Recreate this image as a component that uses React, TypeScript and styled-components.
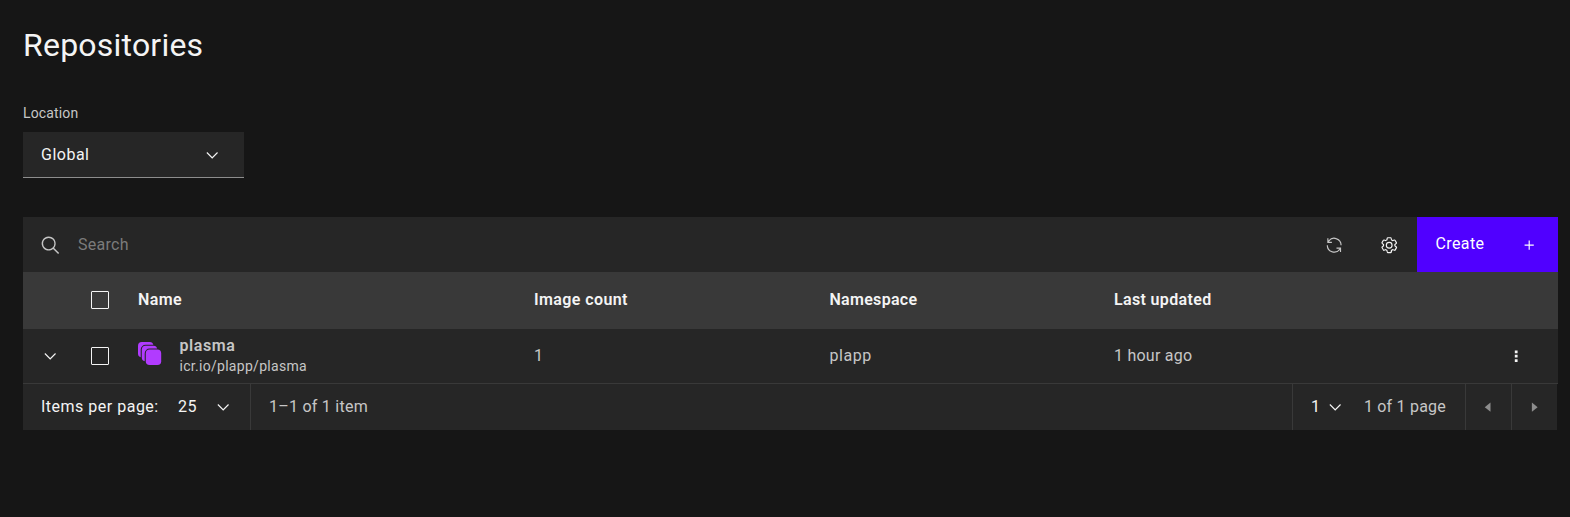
import React from 'react';
import styled, { createGlobalStyle, css } from 'styled-components';

const GlobalStyle = createGlobalStyle`
  *, *::before, *::after { box-sizing: border-box; }
  body {
    margin: 0;
    background: #161616;
    color: #f4f4f4;
    font-family: Roboto, "Liberation Sans", sans-serif;
    font-size: 16px;
    line-height: 20px;
    letter-spacing: 0.4px;
  }
  button { font: inherit; letter-spacing: inherit; color: inherit; background: none; border: 0; padding: 0; }
`;

const Page = styled.main`
  min-height: 517px;
  padding: 26px 12px 0 23px;
`;

const Title = styled.h1`
  margin: 0;
  font-size: 32px;
  font-weight: 400;
  line-height: 38px;
  letter-spacing: 0.22px;
`;

const Label = styled.label`
  display: block;
  margin-top: 39px;
  font-size: 14px;
  line-height: 21px;
  letter-spacing: 0.15px;
  color: #c6c6c6;
`;

const Dropdown = styled.button`
  display: flex;
  align-items: center;
  justify-content: space-between;
  width: 221px;
  height: 46px;
  margin-top: 8px;
  padding: 1px 23px 0 18px;
  background: #262626;
  border-bottom: 1px solid #8d8d8d;
  letter-spacing: 0.5px;
`;

const Icon = styled.svg`
  display: block;
  flex: none;
  fill: currentColor;
`;

const Panel = styled.section`
  margin-top: 39px;
`;

const Toolbar = styled.div`
  display: flex;
  height: 55px;
  background: #262626;
`;

const SearchBox = styled.div`
  display: flex;
  flex: 1;
  align-items: center;
  gap: 18px;
  padding: 1px 0 0 18px;
  color: #c6c6c6;
`;

const Placeholder = styled.span`
  color: #7b7b7b;
  letter-spacing: 0.29px;
`;

const ToolButton = styled.button<{ $dim?: boolean }>`
  display: grid;
  place-items: center;
  width: 55px;
  padding-top: 1px;
  color: ${(p) => (p.$dim ? '#c6c6c6' : '#f4f4f4')};
`;

const CreateButton = styled.button`
  display: flex;
  align-items: center;
  justify-content: space-between;
  width: 141px;
  padding: 1px 20px 0 18.5px;
  background: #5000ff;
  color: #fff;

  span { margin-top: -3px; }
`;

const rowGrid = css`
  display: grid;
  grid-template-columns: 54px 61px 396px 295.5px 284.5px 1fr 83px;
  align-items: center;
`;

const HeaderRow = styled.div`
  ${rowGrid}
  height: 57px;
  padding-bottom: 2px;
  background: #393939;
  font-weight: 600;
`;

const BodyRow = styled.div`
  ${rowGrid}
  height: 55px;
  background: #262626;
  border-bottom: 1px solid #393939;
  color: #c6c6c6;
`;

const Center = styled.div`
  display: grid;
  place-items: center;
  color: #f4f4f4;
`;

const Checkbox = styled.span`
  width: 18px;
  height: 18px;
  margin-left: 14px;
  border: 1px solid #f4f4f4;
  border-radius: 1px;
`;

const Cell = styled.span<{ $spacing?: number }>`
  letter-spacing: ${(p) => p.$spacing ?? 0.4}px;
`;

const NameCell = styled.div`
  display: flex;
  align-items: center;
  gap: 17.5px;

  svg { margin-top: -5px; }
`;

const RepoText = styled.div`
  display: flex;
  flex-direction: column;
  padding-bottom: 1px;
`;

const RepoName = styled.span`
  font-weight: 600;
  line-height: 21px;
  letter-spacing: 0.57px;
`;

const RepoPath = styled.span`
  font-size: 14px;
  line-height: 20px;
  letter-spacing: 0.29px;
`;

const Pagination = styled.div`
  display: flex;
  height: 46px;
  margin-right: 1px;
  background: #262626;
`;

const PageGroup = styled.div<{ $width?: number; $divider?: 'left' | 'right'; $muted?: boolean }>`
  display: flex;
  align-items: center;
  padding-left: 18px;
  ${(p) => (p.$width ? `width: ${p.$width}px;` : 'flex: 1;')}
  ${(p) => p.$divider && `border-${p.$divider}: 1px solid #393939;`}
  ${(p) => p.$muted && 'color: #c6c6c6; letter-spacing: 0.25px;'}
`;

const ItemsLabel = styled.span`
  width: 137px;
  letter-spacing: 0.5px;
`;

const PageSize = styled.span`
  width: 35.7px;
`;

const PageNumber = styled.span`
  width: 15.4px;
`;

const PageTotal = styled.span`
  margin-left: 19.1px;
  color: #c6c6c6;
  letter-spacing: 0.22px;
`;

const PageArrow = styled.button`
  display: grid;
  place-items: center;
  width: 46px;
  border-left: 1px solid #393939;
  color: #8d8d8d;
`;

const paths = {
  chevron: 'M8 11L3 6 3.7 5.3 8 9.6 12.3 5.3 13 6z',
  search:
    'M15.3 14.3l-4.25-4.25a5.9 5.9 0 1 0-.9.9l4.25 4.25zM1.75 6.4a4.75 4.75 0 1 1 4.75 4.75A4.75 4.75 0 0 1 1.75 6.4z',
  renew:
    'M6 5H3.39A5.5 5.5 0 0 1 13.5 8h1A6.5 6.5 0 0 0 3 3.84V2H2v4h4zM10 11h2.61A5.5 5.5 0 0 1 2.5 8h-1A6.5 6.5 0 0 0 13 12.16V14h1v-4h-4z',
  settings:
    'M13.5 8.4V7.6l1-.8c.4-.3.4-.9.2-1.3l-1.2-2C13.3 3.2 13 3 12.6 3c-.1 0-.2 0-.3.1l-1.2.4c-.2-.1-.4-.3-.7-.4l-.3-1.3C10.1 1.3 9.7 1 9.2 1H6.8c-.5 0-.9.3-1 .8L5.6 3.1C5.3 3.2 5.1 3.3 4.9 3.4L3.7 3H3.4C3 3 2.7 3.2 2.5 3.5l-1.2 2C1.1 5.9 1.2 6.4 1.6 6.8l.9.8v.8l-.9.8c-.4.3-.5.9-.2 1.3l1.2 2C2.7 12.8 3 13 3.4 13c.1 0 .2 0 .3-.1l1.2-.4c.2.1.4.3.7.4l.3 1.3c.1.5.5.8 1 .8h2.4c.5 0 .9-.3 1-.8l.3-1.3c.2-.1.4-.2.7-.4l1.2.4c.1 0 .2.1.3.1.4 0 .7-.2.9-.5l1.1-2c.2-.4.2-.9-.2-1.3zM12.6 12l-1.7-.6c-.4.3-.9.6-1.4.8L9.2 14H6.8l-.4-1.8c-.5-.2-.9-.5-1.4-.8L3.4 12l-1.2-2 1.4-1.2c-.1-.5-.1-1.1 0-1.6L2.2 6l1.2-2 1.7.6C5.5 4.2 6 4 6.5 3.8L6.8 2h2.4l.4 1.8c.5.2.9.5 1.4.8L12.6 4l1.2 2-1.4 1.2c.1.5.1 1.1 0 1.6l1.4 1.2zM8 11a3 3 0 1 1 0-6 3 3 0 0 1 0 6zM8 6a2 2 0 1 0 0 4 2 2 0 0 0 0-4z',
  add: 'M8.5 7.5V4h-1v3.5H4v1h3.5V12h1V8.5H12v-1z',
  menu: 'M6.8 3h2.4v2.4H6.8zM6.8 6.8h2.4v2.4H6.8zM6.8 10.6h2.4V13H6.8z',
  left: 'M10 12V4L5 8z',
  right: 'M6 4v8l5-4z',
};

function Glyph({ name, size = 18.4 }: { name: keyof typeof paths; size?: number }) {
  return (
    <Icon width={size} height={size} viewBox="0 0 16 16" fillRule="evenodd" aria-hidden>
      <path d={paths[name]} />
    </Icon>
  );
}

function StackIcon() {
  return (
    <Icon width="24" height="24" viewBox="0 0 24 24" aria-hidden>
      <g fill="#b13bff" stroke="#262626" strokeWidth="2.2" paintOrder="stroke">
        <rect x="0" y="0" width="15.4" height="15.4" rx="3.8" />
        <rect x="3.8" y="3.8" width="15.4" height="15.4" rx="3.8" />
        <rect x="7.8" y="7.6" width="15.4" height="15.4" rx="3.8" />
      </g>
    </Icon>
  );
}

export default function App() {
  return (
    <>
      <GlobalStyle />
      <Page>
        <Title>Repositories</Title>
        <Label>Location</Label>
        <Dropdown>
          Global
          <Glyph name="chevron" />
        </Dropdown>

        <Panel>
          <Toolbar>
            <SearchBox>
              <Glyph name="search" size={19} />
              <Placeholder>Search</Placeholder>
            </SearchBox>
            <ToolButton $dim aria-label="Refresh">
              <Glyph name="renew" />
            </ToolButton>
            <ToolButton aria-label="Settings">
              <Glyph name="settings" />
            </ToolButton>
            <CreateButton>
              <span>Create</span>
              <Glyph name="add" />
            </CreateButton>
          </Toolbar>

          <HeaderRow>
            <span />
            <Checkbox />
            <Cell>Name</Cell>
            <Cell>Image count</Cell>
            <Cell $spacing={0.3}>Namespace</Cell>
            <Cell $spacing={0.35}>Last updated</Cell>
          </HeaderRow>
          <BodyRow>
            <Center>
              <Glyph name="chevron" />
            </Center>
            <Checkbox />
            <NameCell>
              <StackIcon />
              <RepoText>
                <RepoName>plasma</RepoName>
                <RepoPath>icr.io/plapp/plasma</RepoPath>
              </RepoText>
            </NameCell>
            <Cell>1</Cell>
            <Cell $spacing={0.53}>plapp</Cell>
            <Cell $spacing={0.24}>1 hour ago</Cell>
            <Center>
              <Glyph name="menu" />
            </Center>
          </BodyRow>

          <Pagination>
            <PageGroup $width={228} $divider="right">
              <ItemsLabel>Items per page:</ItemsLabel>
              <PageSize>25</PageSize>
              <Glyph name="chevron" />
            </PageGroup>
            <PageGroup $muted>1–1 of 1 item</PageGroup>
            <PageGroup $width={173} $divider="left">
              <PageNumber>1</PageNumber>
              <Glyph name="chevron" />
              <PageTotal>1 of 1 page</PageTotal>
            </PageGroup>
            <PageArrow aria-label="Previous page">
              <Glyph name="left" />
            </PageArrow>
            <PageArrow aria-label="Next page">
              <Glyph name="right" />
            </PageArrow>
          </Pagination>
        </Panel>
      </Page>
    </>
  );
}
